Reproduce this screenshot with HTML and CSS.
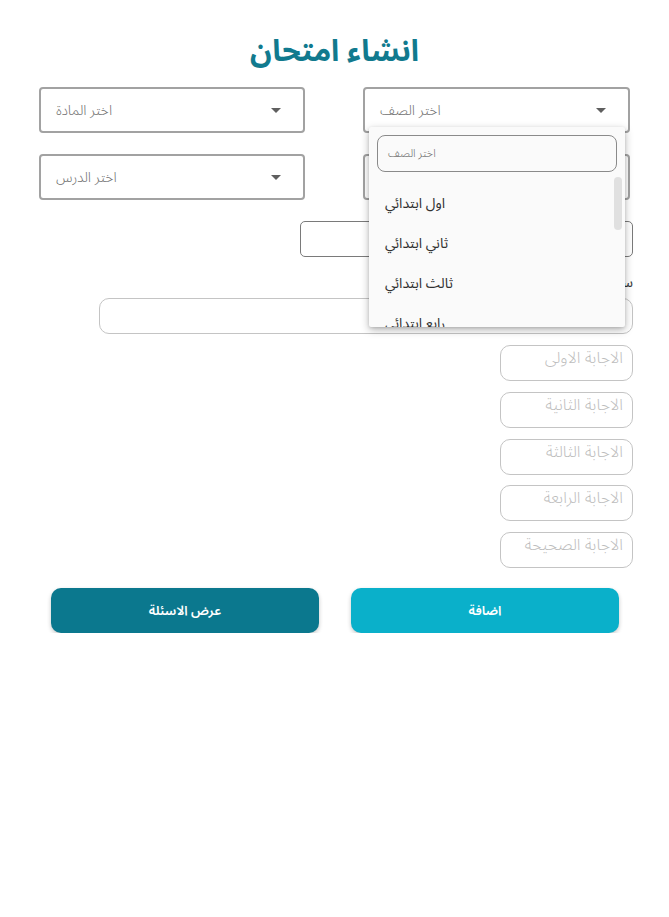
FILE: index.html
```html
<!DOCTYPE html>
<html lang="ar">
<head>
<meta charset="utf-8">
<title>انشاء امتحان</title>
<link rel="stylesheet" href="styles.css">
</head>
<body>
<div class="page">
  <h1 class="title" dir="rtl">انشاء امتحان</h1>

  <div class="selects">
    <div class="select"><span class="select-text" dir="rtl">اختر المادة</span><span class="caret"></span></div>
    <div class="select select-open">
      <span class="select-text" dir="rtl">اختر الصف</span><span class="caret"></span>
      <div class="dropdown">
        <div class="search"><span dir="rtl">اختر الصف</span></div>
        <div class="options">
          <div class="option" dir="rtl">اول ابتدائي</div>
          <div class="option" dir="rtl">ثاني ابتدائي</div>
          <div class="option" dir="rtl">ثالث ابتدائي</div>
          <div class="option" dir="rtl">رابع ابتدائي</div>
        </div>
        <div class="scrollbar"></div>
      </div>
    </div>
    <div class="select"><span class="select-text" dir="rtl">اختر الدرس</span><span class="caret"></span></div>
    <div class="select select-under"><span class="caret"></span></div>
  </div>

  <div class="form">
    <div class="typebox"></div>
    <div class="label" dir="rtl">سؤال</div>
    <div class="question"></div>
    <div class="answers">
      <div class="answer" dir="rtl">الاجابة الاولى</div>
      <div class="answer" dir="rtl">الاجابة الثانية</div>
      <div class="answer" dir="rtl">الاجابة الثالثة</div>
      <div class="answer" dir="rtl">الاجابة الرابعة</div>
      <div class="answer" dir="rtl">الاجابة الصحيحة</div>
    </div>
  </div>

  <div class="buttons">
    <button class="btn btn-dark" dir="rtl">عرض الاسئلة</button>
    <button class="btn btn-light" dir="rtl">اضافة</button>
  </div>
</div>
</body>
</html>
```

FILE: styles.css
```css
html, body {
  margin: 0;
  padding: 0;
  background: #ffffff;
}

body {
  font-family: "Noto Sans Arabic", "Noto Sans", "DejaVu Sans", sans-serif;
  color: #333333;
}

.page {
  width: 669px;
  display: flex;
  flex-direction: column;
}

.title {
  margin: 28px 0 11px;
  height: 48px;
  line-height: 48px;
  text-align: center;
  font-size: 30px;
  font-weight: 700;
  color: #117a8e;
}

.selects {
  display: grid;
  grid-template-columns: 266px 267px;
  column-gap: 58px;
  row-gap: 21px;
  padding: 0 39px;
}

.select {
  position: relative;
  height: 46px;
  box-sizing: border-box;
  border: 2px solid #a2a2a2;
  border-radius: 4px;
  display: flex;
  align-items: center;
  justify-content: space-between;
  padding: 0 22px 0 15px;
  background: #fff;
}

.select-under {
  justify-content: flex-end;
}

.select-text {
  font-size: 14px;
  font-weight: 300;
  color: #707070;
}

.caret {
  width: 0;
  height: 0;
  border-left: 5px solid transparent;
  border-right: 5px solid transparent;
  border-top: 5px solid #5f5f5f;
}

.dropdown {
  position: absolute;
  top: 38px;
  left: 4px;
  width: 256px;
  height: 200px;
  background: #fafafa;
  box-shadow: 0 3px 8px rgba(0, 0, 0, 0.28), 0 1px 3px rgba(0, 0, 0, 0.12);
  border-radius: 2px;
  z-index: 10;
  overflow: hidden;
  box-sizing: border-box;
  padding: 8px 8px 0 8px;
}

.search {
  height: 37px;
  box-sizing: border-box;
  border: 1px solid #8a8a8a;
  border-radius: 8px;
  display: flex;
  align-items: center;
  padding-left: 10px;
  font-size: 11px;
  font-weight: 300;
  color: #666666;
}

.options {
  margin-top: 12px;
}

.option {
  height: 40px;
  line-height: 40px;
  text-align: left;
  padding-left: 8px;
  font-size: 14px;
  font-weight: 400;
  color: #303030;
  direction: ltr;
}

.scrollbar {
  position: absolute;
  top: 50px;
  right: 3px;
  width: 8px;
  height: 53px;
  border-radius: 4px;
  background: #e0e0e0;
}

.form {
  display: flex;
  flex-direction: column;
  align-items: flex-end;
  padding-right: 36px;
  margin-top: 21px;
}

.typebox {
  width: 333px;
  height: 36px;
  box-sizing: border-box;
  border: 1px solid #7a7a7a;
  border-radius: 5px;
}

.label {
  margin-top: 16px;
  height: 20px;
  line-height: 20px;
  font-size: 14px;
  font-weight: 400;
  color: #333;
}

.question {
  margin-top: 5px;
  width: 534px;
  height: 36px;
  box-sizing: border-box;
  border: 1px solid #c4c4c4;
  border-radius: 10px;
}

.answers {
  margin-top: 11px;
  display: flex;
  flex-direction: column;
  gap: 10.75px;
}

.answer {
  width: 133px;
  height: 36px;
  box-sizing: border-box;
  border: 1px solid #c4c4c4;
  border-radius: 10px;
  padding: 1px 9px 0 0;
  font-size: 16px;
  font-weight: 300;
  line-height: 22px;
  color: #bdbdbd;
  text-align: right;
}

.buttons {
  display: flex;
  gap: 32px;
  padding-left: 51px;
  margin-top: 20px;
}

.btn {
  width: 268px;
  height: 45px;
  border: none;
  border-radius: 10px;
  color: #ffffff;
  font-family: inherit;
  font-size: 13px;
  font-weight: 600;
  box-shadow: 0 2px 4px rgba(0, 0, 0, 0.22);
}

.btn-dark {
  background: #0b788e;
}

.btn-light {
  background: #0ab0ca;
}
```
